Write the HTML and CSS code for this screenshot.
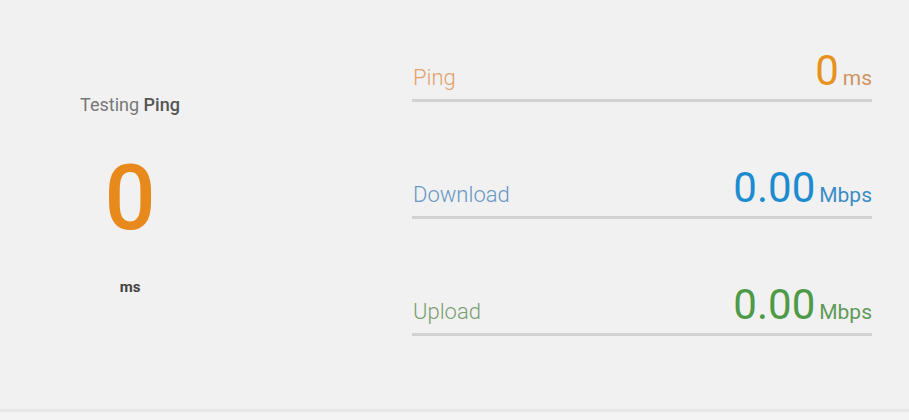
FILE: index.html
```html
<!DOCTYPE html>
<html lang="en">
<head>
    <meta charset="UTF-8">
    <meta name="viewport" content="width=device-width, initial-scale=1.0">
    <title>Speed Test</title>
    <link rel="stylesheet" href="styles.css">
</head>
<body>
    <div class="test">
        <div class="status">
            <div class="status-title">Testing <strong>Ping</strong></div>
            <div class="status-value">0</div>
            <div class="status-unit">ms</div>
        </div>

        <div class="results">
            <div class="row ping">
                <span class="label">Ping</span>
                <span class="value">0<small>ms</small></span>
            </div>
            <div class="row download">
                <span class="label">Download</span>
                <span class="value">0.00<small>Mbps</small></span>
            </div>
            <div class="row upload">
                <span class="label">Upload</span>
                <span class="value">0.00<small>Mbps</small></span>
            </div>
        </div>
    </div>
    <div class="footer"></div>
</body>
</html>
```

FILE: styles.css
```css
body {
    margin: 0;
    background: #f1f1f1;
    font-family: Roboto, "Liberation Sans", sans-serif;
    color: #555;
}

.test {
    display: flex;
    height: 409px;
    padding-right: 37px;
    box-sizing: border-box;
}

.status {
    width: 260px;
    display: flex;
    flex-direction: column;
    align-items: center;
    padding-top: 96px;
}

.status-title {
    font-size: 18px;
    line-height: 1;
    color: #777;
}

.status-title strong {
    font-weight: 500;
    color: #555;
}

.status-value {
    margin-top: 40px;
    font-size: 90px;
    line-height: 1;
    font-weight: 500;
    color: #e8891c;
}

.status-unit {
    margin-top: 36px;
    font-size: 15px;
    line-height: 1;
    font-weight: 700;
    color: #444;
}

.results {
    margin-left: 152px;
    flex: 1;
    padding-top: 50px;
}

.row {
    display: flex;
    justify-content: space-between;
    align-items: baseline;
    padding-bottom: 7px;
    border-bottom: 3px solid #d2d2d2;
    margin-bottom: 65px;
    line-height: 1;
}

.label {
    font-size: 22px;
    font-weight: 300;
    padding-left: 1px;
}

.value {
    font-size: 42px;
    font-weight: 400;
}

.value small {
    font-size: 21px;
    margin-left: 4px;
}

.ping .label { color: #e3a06a; }
.ping .value { color: #e8911f; }
.ping .value small { color: #cf9460; }

.download .label { color: #6797c4; }
.download .value { color: #1d8bcf; }
.download .value small { color: #3a8cc4; }

.upload .label { color: #7a9e72; }
.upload .value { color: #4d9a47; }
.upload .value small { color: #5f9a58; }

.footer {
    border-top: 3px solid #e6e6e6;
    height: 20px;
    background: #f4f4f4;
}
```
